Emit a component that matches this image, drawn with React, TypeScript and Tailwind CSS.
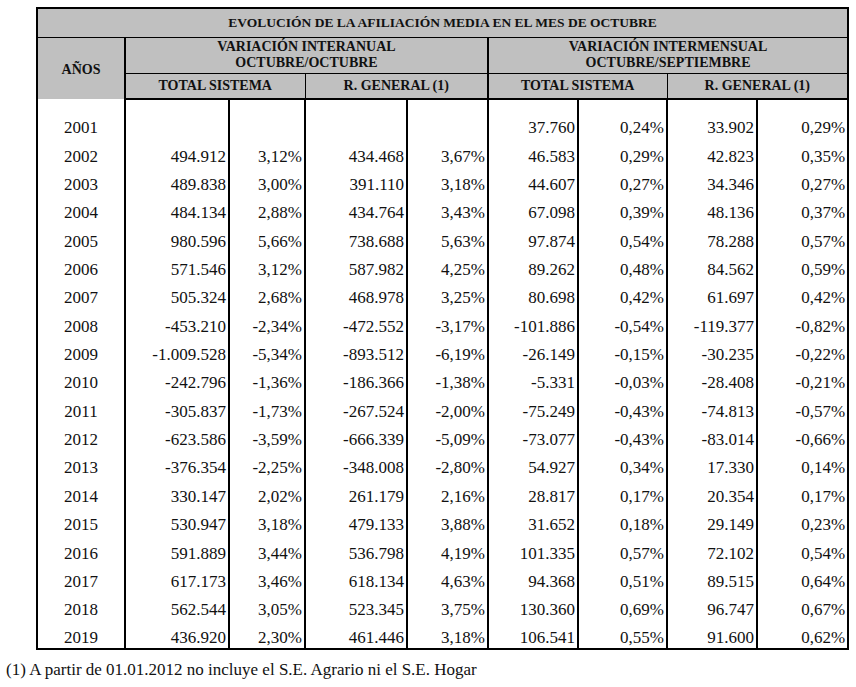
import React from 'react';

type Row = [string, string, string, string, string, string, string, string, string];

const rows: Row[] = [
  ['2001', '', '', '', '', '37.760', '0,24%', '33.902', '0,29%'],
  ['2002', '494.912', '3,12%', '434.468', '3,67%', '46.583', '0,29%', '42.823', '0,35%'],
  ['2003', '489.838', '3,00%', '391.110', '3,18%', '44.607', '0,27%', '34.346', '0,27%'],
  ['2004', '484.134', '2,88%', '434.764', '3,43%', '67.098', '0,39%', '48.136', '0,37%'],
  ['2005', '980.596', '5,66%', '738.688', '5,63%', '97.874', '0,54%', '78.288', '0,57%'],
  ['2006', '571.546', '3,12%', '587.982', '4,25%', '89.262', '0,48%', '84.562', '0,59%'],
  ['2007', '505.324', '2,68%', '468.978', '3,25%', '80.698', '0,42%', '61.697', '0,42%'],
  ['2008', '-453.210', '-2,34%', '-472.552', '-3,17%', '-101.886', '-0,54%', '-119.377', '-0,82%'],
  ['2009', '-1.009.528', '-5,34%', '-893.512', '-6,19%', '-26.149', '-0,15%', '-30.235', '-0,22%'],
  ['2010', '-242.796', '-1,36%', '-186.366', '-1,38%', '-5.331', '-0,03%', '-28.408', '-0,21%'],
  ['2011', '-305.837', '-1,73%', '-267.524', '-2,00%', '-75.249', '-0,43%', '-74.813', '-0,57%'],
  ['2012', '-623.586', '-3,59%', '-666.339', '-5,09%', '-73.077', '-0,43%', '-83.014', '-0,66%'],
  ['2013', '-376.354', '-2,25%', '-348.008', '-2,80%', '54.927', '0,34%', '17.330', '0,14%'],
  ['2014', '330.147', '2,02%', '261.179', '2,16%', '28.817', '0,17%', '20.354', '0,17%'],
  ['2015', '530.947', '3,18%', '479.133', '3,88%', '31.652', '0,18%', '29.149', '0,23%'],
  ['2016', '591.889', '3,44%', '536.798', '4,19%', '101.335', '0,57%', '72.102', '0,54%'],
  ['2017', '617.173', '3,46%', '618.134', '4,63%', '94.368', '0,51%', '89.515', '0,64%'],
  ['2018', '562.544', '3,05%', '523.345', '3,75%', '130.360', '0,69%', '96.747', '0,67%'],
  ['2019', '436.920', '2,30%', '461.446', '3,18%', '106.541', '0,55%', '91.600', '0,62%'],
];

const widths = [88, 104, 76, 102, 81, 90, 89, 90, 91];

export default function App() {
  return (
    <div className="w-[856px] h-[687px] bg-white pt-[7px] font-['Liberation_Serif',serif] text-[#111]">
      <table className="ml-[36px] w-[812px] table-fixed border-collapse border-2 border-black">
        <colgroup>
          {widths.map((w, i) => (
            <col key={i} style={{ width: w }} />
          ))}
        </colgroup>
        <thead className="bg-[#c0c0c0] text-[14px] font-bold leading-[16px]">
          <tr className="h-[29px]">
            <th colSpan={9} className="border-b border-black text-center text-[13.5px]">
              EVOLUCIÓN DE LA AFILIACIÓN MEDIA EN EL MES DE OCTUBRE
            </th>
          </tr>
          <tr className="h-[36px]">
            <th rowSpan={2} className="border-r-2 border-black pt-[4px] text-center">
              AÑOS
            </th>
            <th colSpan={4} className="border-b border-r-2 border-black text-center">
              VARIACIÓN INTERANUAL
              <br />
              OCTUBRE/OCTUBRE
            </th>
            <th colSpan={4} className="border-b border-black text-center">
              VARIACIÓN INTERMENSUAL
              <br />
              OCTUBRE/SEPTIEMBRE
            </th>
          </tr>
          <tr className="h-[26px]">
            <th colSpan={2} className="border-b-2 border-r border-black text-center">
              TOTAL SISTEMA
            </th>
            <th colSpan={2} className="border-b-2 border-r-2 border-black text-center">
              R. GENERAL (1)
            </th>
            <th colSpan={2} className="border-b-2 border-r border-black text-center">
              TOTAL SISTEMA
            </th>
            <th colSpan={2} className="border-b-2 border-black text-center">
              R. GENERAL (1)
            </th>
          </tr>
        </thead>
        <tbody className="text-[17px] leading-[20px]">
          <tr className="h-[11px]">
            <td className="border-r-2 border-black" />
            {widths.slice(1).map((_, i) => (
              <td key={i} className={i < 7 ? 'border-r-2 border-black' : ''} />
            ))}
          </tr>
          {rows.map((r) => (
            <tr key={r[0]} className="h-[28.35px]">
              {r.map((v, i) => (
                <td
                  key={i}
                  className={
                    i === 0
                      ? 'border-r-2 border-black text-center align-bottom'
                      : i < 8
                        ? 'border-r-2 border-black pr-[2px] text-right align-bottom'
                        : 'pr-[2px] text-right align-bottom'
                  }
                >
                  {v}
                </td>
              ))}
            </tr>
          ))}
        </tbody>
      </table>
      <p className="mt-[10px] pl-[6px] text-[17px] leading-[20px]">
        (1) A partir de 01.01.2012 no incluye el S.E. Agrario ni el S.E. Hogar
      </p>
    </div>
  );
}
